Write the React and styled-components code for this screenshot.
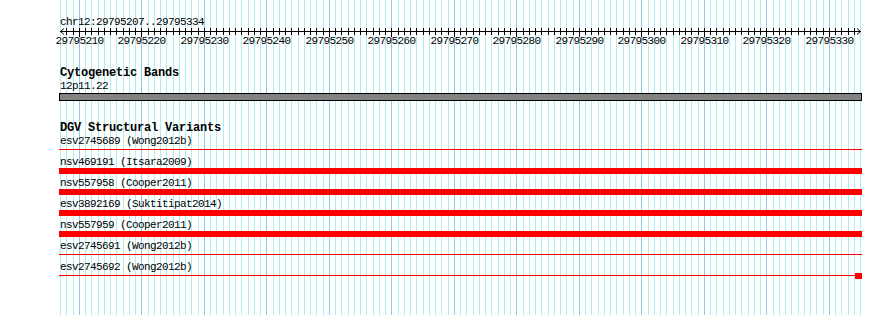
import React from "react";
import styled, { createGlobalStyle } from "styled-components";

const START = 29795207;
const END = 29795334;
const BASES = END - START + 1;
const PX = 6.25;
const GRID_LEFT = 60;
const PANEL_LEFT = 59;

const baseX = (i) => Math.round(GRID_LEFT + i * PX) + 0.5;

const variants = [
  { name: "esv2745689 (Wong2012b)", kind: "thin" },
  { name: "nsv469191 (Itsara2009)", kind: "thick" },
  { name: "nsv557958 (Cooper2011)", kind: "thick" },
  { name: "esv3892169 (Suktitipat2014)", kind: "thick" },
  { name: "nsv557959 (Cooper2011)", kind: "thick" },
  { name: "esv2745691 (Wong2012b)", kind: "thin" },
  { name: "esv2745692 (Wong2012b)", kind: "thin", endBlock: true },
];

const GlobalStyle = createGlobalStyle`
  html, body {
    margin: 0;
    padding: 0;
    background: #fff;
  }
  body {
    font-family: "Liberation Mono", "DejaVu Sans Mono", monospace;
    color: #000;
  }
`;

const Page = styled.div`
  position: relative;
  width: 890px;
  height: 315px;
  overflow: hidden;
  background: #fff;
`;

const GridLayer = styled.svg`
  position: absolute;
  left: 0;
  top: 0;
  z-index: 0;
`;

const Panel = styled.div`
  position: relative;
  z-index: 1;
  margin-left: ${PANEL_LEFT}px;
  width: 803px;
  padding-top: 16px;
  display: flex;
  flex-direction: column;
`;

const SmallText = styled.div`
  font-size: 11px;
  letter-spacing: -0.6px;
  line-height: ${(p) => p.$lh || 12}px;
  padding-left: 1px;
  white-space: pre;
`;

const RulerSvg = styled.svg`
  display: block;
  overflow: visible;
`;

const Track = styled.section`
  display: flex;
  flex-direction: column;
  margin-top: ${(p) => p.$gap}px;
`;

const TrackTitle = styled.h3`
  margin: 0;
  font-size: 12px;
  font-weight: bold;
  letter-spacing: -0.2px;
  line-height: 13px;
  padding-left: 1px;
  white-space: pre;
`;

const BandBar = styled.div`
  box-sizing: border-box;
  height: 8px;
  width: 100%;
  background: #838383;
  border: 1px solid #000;
`;

const VariantRow = styled.div`
  display: flex;
  flex-direction: column;
`;

const Strip = styled.div`
  display: flex;
  align-items: flex-start;
  height: 9px;
`;

const Feature = styled.div`
  flex: 1;
  background: #ff0000;
  height: ${(p) => (p.$thick ? 6 : 1)}px;
  margin-top: ${(p) => (p.$thick ? 0 : 2)}px;
`;

const EndBlock = styled.div`
  flex: none;
  width: 7px;
  height: 6px;
  background: #ff0000;
`;

function Grid() {
  const lines = [];
  for (let i = 0; i <= BASES; i++) {
    const major = (START + i) % 10 === 0;
    lines.push(
      <line
        key={i}
        x1={baseX(i)}
        x2={baseX(i)}
        y1={0}
        y2={315}
        stroke={major ? "#8ccbee" : "#afeeee"}
        strokeWidth={1}
      />
    );
  }
  return (
    <GridLayer width={890} height={315} shapeRendering="crispEdges">
      {lines}
    </GridLayer>
  );
}

function Ruler() {
  const ticks = [];
  const labels = [];
  for (let i = 1; i < BASES; i++) {
    const x = baseX(i) - PANEL_LEFT;
    const major = (START + i) % 10 === 0;
    ticks.push(
      <line key={i} x1={x} x2={x} y1={0} y2={major ? 9 : 7} stroke="#000" />
    );
    if (major) {
      labels.push(
        <text
          key={"l" + i}
          x={x}
          y={16}
          textAnchor="middle"
          fontFamily='"Liberation Mono", monospace'
          fontSize={11}
          letterSpacing={-0.6}
          fill="#000"
        >
          {START + i}
        </text>
      );
    }
  }
  return (
    <RulerSvg width={803} height={18}>
      <g shapeRendering="crispEdges">
        <line x1={1} x2={802} y1={3.5} y2={3.5} stroke="#000" />
        {ticks}
      </g>
      <polyline points="5,0.5 1.5,3.5 5,6.5" fill="none" stroke="#000" />
      <polyline points="798,0.5 801.5,3.5 798,6.5" fill="none" stroke="#000" />
      {labels}
    </RulerSvg>
  );
}

export default function App() {
  return (
    <Page>
      <GlobalStyle />
      <Grid />
      <Panel>
        <SmallText>{`chr12:${START}..${END}`}</SmallText>
        <Ruler />

        <Track $gap={21}>
          <TrackTitle>Cytogenetic Bands</TrackTitle>
          <SmallText $lh={13}>12p11.22</SmallText>
          <BandBar />
        </Track>

        <Track $gap={21}>
          <TrackTitle>DGV Structural Variants</TrackTitle>
          {variants.map((v) => (
            <VariantRow key={v.name}>
              <SmallText>{v.name}</SmallText>
              <Strip>
                <Feature $thick={v.kind === "thick"} />
                {v.endBlock && <EndBlock />}
              </Strip>
            </VariantRow>
          ))}
        </Track>
      </Panel>
    </Page>
  );
}
